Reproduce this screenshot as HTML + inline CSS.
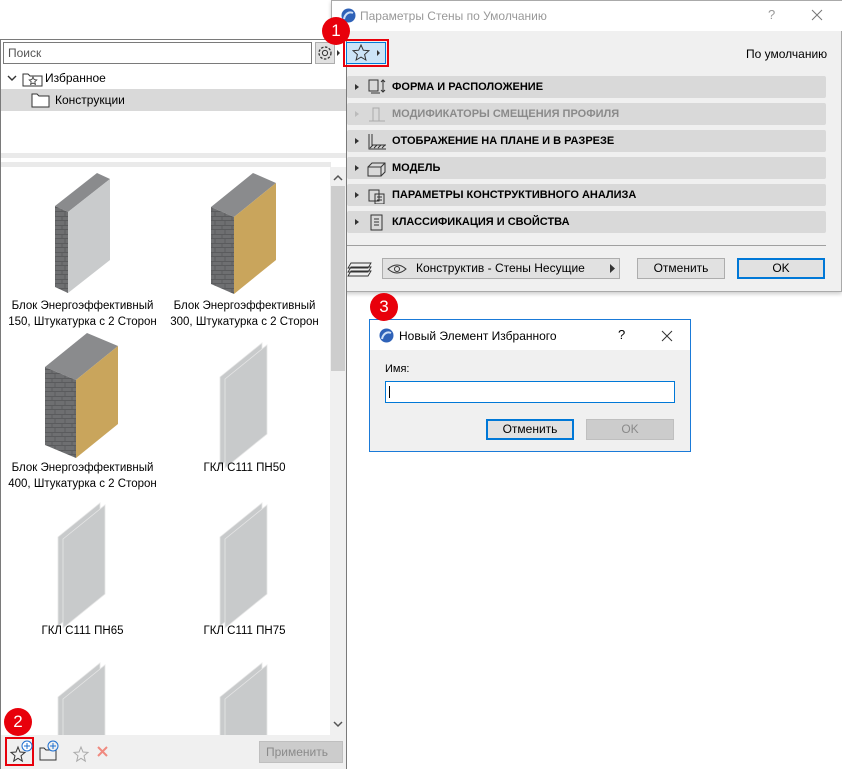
<!DOCTYPE html>
<html><head><meta charset="utf-8"><style>
*{box-sizing:border-box;margin:0;padding:0}
body{width:842px;height:769px;background:#fff;position:relative;overflow:hidden;font-family:"Liberation Sans","Noto Sans CJK SC",sans-serif;font-size:12px;color:#000}
.abs{position:absolute}
.badge{position:absolute;width:28px;height:28px;border-radius:50%;background:#e8000b;color:#fff;font-size:17px;text-align:center;line-height:28px}
.sec{position:absolute;left:347px;width:479px;height:22px;background:#d9d9d9;border-radius:2px;font-weight:bold;font-size:11px;line-height:22px}
.sec .tri{position:absolute;left:8px;top:8px;width:0;height:0;border-left:4px solid #333;border-top:3.5px solid transparent;border-bottom:3.5px solid transparent}
.sec .t{position:absolute;left:45px}
.sec svg{position:absolute;left:20px;top:2px}
.btn{position:absolute;border:1px solid #adadad;background:#e1e1e1;text-align:center;font-size:12px}
.lbl{position:absolute;width:165px;text-align:center;font-size:11.5px;line-height:16px}
</style></head><body>
<!-- main dialog (behind left panel) -->
<div class="abs" style="left:331px;top:0;width:511px;height:292px;border:1px solid #aaa;background:#f0f0f0;box-shadow:0 2px 4px rgba(0,0,0,.2)"></div>
<div class="abs" style="left:332px;top:1px;width:510px;height:30px;background:#fff"></div>
<svg class="abs" style="left:341px;top:8px" width="15" height="15"><circle cx="7.5" cy="7.5" r="7" fill="#2f62b8"/><path d="M3 11c1-5 5-8 9-6" stroke="#cfe0f7" stroke-width="2" fill="none"/></svg>
<div class="abs" style="left:360px;top:9px;color:#999;font-size:12px">Параметры Стены по Умолчанию</div>
<div class="abs" style="left:768px;top:7px;color:#999;font-size:13px">?</div>
<svg class="abs" style="left:811px;top:9px" width="12" height="12"><path d="M1 1l10 10M11 1L1 11" stroke="#777"/></svg>
<!-- left panel -->
<div class="abs" style="left:0;top:39px;width:347px;height:730px;border:1px solid #7a7a7a;border-bottom:none;background:#fff"></div>
<div class="abs" style="left:3px;top:42px;width:309px;height:22px;border:1px solid #7a7a7a;background:#fff;padding-left:4px;line-height:20px;color:#555">Поиск</div>
<div class="abs" style="left:315px;top:42px;width:20px;height:22px;border:1px solid #adadad;background:#e1e1e1"></div>
<svg class="abs" style="left:316px;top:44px" width="30" height="18"><circle cx="9" cy="9" r="6" fill="none" stroke="#333" stroke-width="1.3" stroke-dasharray="2.5 1.5"/><circle cx="9" cy="9" r="2.6" fill="none" stroke="#333"/><path d="M21 6v6l3-3z" fill="#333"/></svg>
<svg class="abs" style="left:7px;top:71px" width="44" height="16"><path d="M1 5l4 4 4-4" fill="none" stroke="#333" stroke-width="1.4"/><path d="M16 3h5l2 2h12v10H16z" fill="#fff" stroke="#333"/><path d="M26 6l1.2 2.6 2.6.3-2 1.8.6 2.7-2.4-1.4-2.4 1.4.6-2.7-2-1.8 2.6-.3z" fill="none" stroke="#333" stroke-width=".8"/></svg>
<div class="abs" style="left:45px;top:71px;line-height:14px;font-size:12px">Избранное</div>
<div class="abs" style="left:1px;top:89px;width:345px;height:22px;background:#d9d9d9"></div>
<svg class="abs" style="left:31px;top:92px" width="20" height="16"><path d="M1 2h5l2 2h10v11H1z" fill="#fff" stroke="#333"/></svg>
<div class="abs" style="left:55px;top:93px;font-size:12px">Конструкции</div>
<div class="abs" style="left:1px;top:153px;width:345px;height:5px;background:#eaeaea"></div>
<div class="abs" style="left:1px;top:162px;width:330px;height:5px;background:#eaeaea"></div>
<!-- scrollbar -->
<div class="abs" style="left:330px;top:167px;width:16px;height:568px;background:#f0f0f0"></div>
<div class="abs" style="left:331px;top:186px;width:14px;height:185px;background:#cdcdcd"></div>
<svg class="abs" style="left:333px;top:174px" width="10" height="8"><path d="M1 6l4-4 4 4" fill="none" stroke="#555" stroke-width="1.5"/></svg>
<svg class="abs" style="left:333px;top:720px" width="10" height="8"><path d="M1 2l4 4 4-4" fill="none" stroke="#555" stroke-width="1.5"/></svg>
<!-- walls -->
<svg class="abs" style="left:0;top:167px" width="330" height="568">
<defs><pattern id="br" width="10" height="9" patternUnits="userSpaceOnUse"><rect width="10" height="9" fill="#6e6f71"/><path d="M0 8.5h10M5 0v4.5M0 4.5h10M2 4.5v4" stroke="#5a5b5d" stroke-width=".9"/></pattern></defs>
<polygon points="55,39 97,6 110,12 68,45" fill="#8a8b8d"/>
<polygon points="55,39 68,45 68,126 55,120" fill="url(#br)"/>
<polygon points="68,45 110,12 110,93 68,126" fill="#c9cbcc"/>
<polygon points="211,40 253,6 276,16 234,50" fill="#8a8b8d"/>
<polygon points="211,40 234,50 234,127 211,117" fill="url(#br)"/>
<polygon points="234,50 276,16 276,93 234,127" fill="#c9a55c"/>
<polygon points="45,200 87,166 118,179 76,213" fill="#8a8b8d"/>
<polygon points="45,200 76,213 76,291 45,278" fill="url(#br)"/>
<polygon points="76,213 118,179 118,257 76,291" fill="#c9a55c"/>
<g fill="#c8cacb" stroke="#e6e6e6" stroke-width=".8">
<polygon points="220,210 262,176 262,265 220,299"/><polygon points="225,212 267,178 267,267 225,301"/>
<polygon points="58,370 100,336 100,425 58,459"/><polygon points="63,372 105,338 105,427 63,461"/>
<polygon points="220,370 262,336 262,425 220,459"/><polygon points="225,372 267,338 267,427 225,461"/>
<polygon points="58,530 100,496 100,585 58,619"/><polygon points="63,532 105,498 105,587 63,621"/>
<polygon points="220,530 262,496 262,585 220,619"/><polygon points="225,532 267,498 267,587 225,621"/>
</g></svg>
<div class="lbl" style="left:0;top:298px">Блок Энергоэффективный<br>150, Штукатурка с 2 Сторон</div>
<div class="lbl" style="left:162px;top:298px">Блок Энергоэффективный<br>300, Штукатурка с 2 Сторон</div>
<div class="lbl" style="left:0;top:460px">Блок Энергоэффективный<br>400, Штукатурка с 2 Сторон</div>
<div class="lbl" style="left:162px;top:460px">ГКЛ С111 ПН50</div>
<div class="lbl" style="left:0;top:623px">ГКЛ С111 ПН65</div>
<div class="lbl" style="left:162px;top:623px">ГКЛ С111 ПН75</div>
<!-- bottom toolbar -->
<div class="abs" style="left:1px;top:735px;width:345px;height:34px;background:#f0f0f0"></div>
<div class="abs" style="left:5px;top:737px;width:29px;height:29px;border:2px solid #e8000b"></div>
<svg class="abs" style="left:8px;top:740px" width="110" height="24">
<path d="M10 7l2 5 5 .4-4 3.4 1.3 5.3-4.3-2.8-4.3 2.8 1.3-5.3-4-3.4 5-.4z" fill="none" stroke="#333"/>
<circle cx="19" cy="6" r="5" fill="#fff" stroke="#1e6fd0"/><path d="M19 3v6M16 6h6" stroke="#1e6fd0"/>
<path d="M32 8h4l2 2h10v10H32z" fill="none" stroke="#333"/><circle cx="45" cy="6" r="5" fill="#f0f0f0" stroke="#1e6fd0"/><path d="M45 3v6M42 6h6" stroke="#1e6fd0"/>
<path d="M73 7l2 5 5 .4-4 3.4 1.3 5.3-4.3-2.8-4.3 2.8 1.3-5.3-4-3.4 5-.4z" fill="none" stroke="#aaa"/>
<path d="M90 7l9 9M99 7l-9 9" stroke="#f08a80" stroke-width="2"/></svg>
<div class="abs" style="left:259px;top:741px;width:84px;height:22px;border:1px solid #bfbfbf;background:#ccc;color:#8a8a8a;line-height:20px;padding-left:6px;font-size:12px">Применить</div>
<div class="badge" style="left:4px;top:708px">2</div>
<!-- dialog content -->
<div class="abs" style="left:343px;top:39px;width:46px;height:28px;border:2px solid #e8000b"></div>
<div class="abs" style="left:346px;top:42px;width:40px;height:22px;border:1px solid #0078d7;background:#cce4f7"></div>
<svg class="abs" style="left:352px;top:44px" width="32" height="18"><path d="M9 1l2.3 5.2 5.6.5-4.3 3.8 1.3 5.5L9 13.1 4.1 16l1.3-5.5L1.1 6.7l5.6-.5z" fill="none" stroke="#333"/><path d="M25 6v6l3-3z" fill="#333"/></svg>
<div class="badge" style="left:322px;top:17px">1</div>
<div class="abs" style="left:746px;top:47px;font-size:12px">По умолчанию</div>
<div class="sec" style="top:76px"><i class="tri"></i><svg width="20" height="18"><rect x="2" y="2" width="9" height="11" fill="none" stroke="#333"/><path d="M4 15h9M16 2v12M14 4l2-2 2 2M14 12l2 2 2-2" stroke="#333" fill="none"/></svg><span class="t">ФОРМА И РАСПОЛОЖЕНИЕ</span></div>
<div class="sec" style="top:103px;color:#8a8a8a"><i class="tri" style="border-left-color:#bbb"></i><svg width="20" height="18"><path d="M6 3h6v13H6zM2 16h16" stroke="#aaa" fill="none"/></svg><span class="t">МОДИФИКАТОРЫ СМЕЩЕНИЯ ПРОФИЛЯ</span></div>
<div class="sec" style="top:130px"><i class="tri"></i><svg width="20" height="18"><path d="M2 2v15h17M5 2v11h14" stroke="#333" fill="none"/><path d="M3 16l3-3M7 16l3-3M11 16l3-3M15 16l3-3" stroke="#333"/></svg><span class="t">ОТОБРАЖЕНИЕ НА ПЛАНЕ И В РАЗРЕЗЕ</span></div>
<div class="sec" style="top:157px"><i class="tri"></i><svg width="20" height="18"><path d="M1 8h13v9H1zM1 8l4-4h13v9l-4 4M14 8l4-4" stroke="#333" fill="none"/></svg><span class="t">МОДЕЛЬ</span></div>
<div class="sec" style="top:184px"><i class="tri"></i><svg width="20" height="18"><path d="M2 4h10v11H2zM8 8h9v10H8zM10 11h5M10 14h5" stroke="#333" fill="none"/></svg><span class="t">ПАРАМЕТРЫ КОНСТРУКТИВНОГО АНАЛИЗА</span></div>
<div class="sec" style="top:211px"><i class="tri"></i><svg width="20" height="18"><path d="M4 2h11v15H4zM7 6h5M7 9h5M7 12h5" stroke="#333" fill="none"/></svg><span class="t">КЛАССИФИКАЦИЯ И СВОЙСТВА</span></div>
<div class="abs" style="left:347px;top:245px;width:479px;height:1px;background:#a0a0a0"></div>
<svg class="abs" style="left:347px;top:259px" width="28" height="18"><path d="M4 4h20l-3 5H1zM4 8h20l-3 5H1zM4 12h20l-3 5H1z" fill="#f0f0f0" stroke="#333" stroke-width=".9"/></svg>
<div class="btn" style="left:382px;top:258px;width:238px;height:21px;text-align:left;padding-left:33px;line-height:19px">Конструктив - Стены Несущие</div>
<svg class="abs" style="left:387px;top:263px" width="20" height="12"><path d="M1 6q9-8 18 0q-9 8-18 0z" fill="none" stroke="#333"/><circle cx="10" cy="6" r="2.5" fill="none" stroke="#333"/></svg>
<svg class="abs" style="left:610px;top:264px" width="6" height="9"><path d="M0 0v9l5-4.5z" fill="#333"/></svg>
<div class="btn" style="left:637px;top:258px;width:88px;height:21px;line-height:19px">Отменить</div>
<div class="btn" style="left:737px;top:258px;width:88px;height:21px;line-height:17px;border:2px solid #0078d7">OK</div>
<!-- small dialog -->
<div class="abs" style="left:369px;top:319px;width:322px;height:133px;border:1px solid #1a7ad8;background:#f0f0f0"></div>
<div class="abs" style="left:370px;top:320px;width:320px;height:30px;background:#fff"></div>
<svg class="abs" style="left:379px;top:328px" width="15" height="15"><circle cx="7.5" cy="7.5" r="7" fill="#2f62b8"/><path d="M3 11c1-5 5-8 9-6" stroke="#cfe0f7" stroke-width="2" fill="none"/></svg>
<div class="abs" style="left:399px;top:329px;font-size:12px">Новый Элемент Избранного</div>
<div class="abs" style="left:618px;top:327px;font-size:13px">?</div>
<svg class="abs" style="left:661px;top:330px" width="12" height="12"><path d="M1 1l10 10M11 1L1 11" stroke="#333"/></svg>
<div class="abs" style="left:385px;top:363px;font-size:11px">Имя:</div>
<div class="abs" style="left:385px;top:381px;width:290px;height:22px;border:1px solid #0078d7;background:#fff"></div>
<div class="abs" style="left:389px;top:386px;width:1px;height:12px;background:#000"></div>
<div class="btn" style="left:486px;top:419px;width:88px;height:21px;line-height:17px;border:2px solid #0078d7">Отменить</div>
<div class="btn" style="left:586px;top:419px;width:88px;height:21px;line-height:19px;background:#ccc;border-color:#bfbfbf;color:#8a8a8a">OK</div>
<div class="badge" style="left:370px;top:293px">3</div>
</body></html>
